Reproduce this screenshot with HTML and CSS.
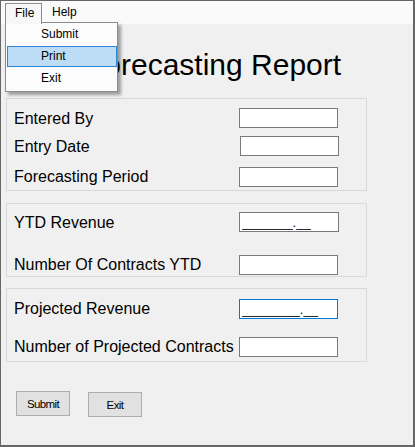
FILE: index.html
```html
<!DOCTYPE html>
<html>
<head>
<meta charset="utf-8">
<link rel="stylesheet" href="styles.css">
</head>
<body>
<div class="window">
  <div class="menubar">
    <div class="menu-item menu-open">File</div>
    <div class="menu-item">Help</div>
  </div>
  <div class="dropdown">
    <div class="drop-item">Submit</div>
    <div class="drop-item drop-hover">Print</div>
    <div class="drop-item">Exit</div>
  </div>

  <h1 class="title">Forecasting Report</h1>

  <div class="group group-1">
    <div class="row row-a">
      <label class="lbl">Entered By</label>
      <input class="field" type="text">
    </div>
    <div class="row row-b">
      <label class="lbl">Entry Date</label>
      <input class="field shift-x" type="text">
    </div>
    <div class="row row-c">
      <label class="lbl">Forecasting Period</label>
      <input class="field shift-y" type="text">
    </div>
  </div>

  <div class="group group-2">
    <div class="row row-d">
      <label class="lbl">YTD Revenue</label>
      <input class="field wide" type="text" value="_______.__">
    </div>
    <div class="row row-e">
      <label class="lbl">Number Of Contracts YTD</label>
      <input class="field shift-y" type="text">
    </div>
  </div>

  <div class="group group-3">
    <div class="row row-f">
      <label class="lbl">Projected Revenue</label>
      <input class="field focused shift-y" type="text" value="________.__">
    </div>
    <div class="row row-g">
      <label class="lbl">Number of Projected Contracts</label>
      <input class="field shift-y" type="text">
    </div>
  </div>

  <div class="buttons">
    <button class="btn">Submit</button>
    <button class="btn shift-y">Exit</button>
  </div>
</div>
</body>
</html>
```
FILE: styles.css
```css
* { box-sizing: border-box; }

html, body {
  margin: 0;
  padding: 0;
  background: #f0f0f0;
}

body {
  font-family: "Liberation Sans", Arial, sans-serif;
  color: #000;
}

.window {
  position: relative;
  width: 415px;
  height: 447px;
  border-style: solid;
  border-color: #666666;
  border-width: 1px 2px 2px 1px;
  background: #f0f0f0;
  overflow: hidden;
}

.menubar {
  height: 23px;
  background: #fafafa;
  display: flex;
  align-items: flex-start;
  padding-left: 4px;
  padding-top: 2px;
}

.menu-item {
  font-size: 12px;
  height: 20px;
  line-height: 19px;
  padding: 0 8px 0 10px;
}

.menu-open {
  position: relative;
  z-index: 3;
  width: 37px;
  height: 21px;
  padding-left: 9px;
  border: 1px solid #8c8c8c;
  border-bottom: none;
  background: #f7f7f7;
  line-height: 19px;
}

.dropdown {
  position: absolute;
  z-index: 2;
  left: 4px;
  top: 21px;
  width: 113px;
  height: 70px;
  background: #fcfcfc;
  border: 1px solid #8c8c8c;
  box-shadow: 3px 3px 3px rgba(0, 0, 0, 0.35);
}

.drop-item {
  height: 22px;
  line-height: 22px;
  font-size: 12px;
  padding-left: 35px;
}

.drop-hover {
  position: relative;
  z-index: 0;
}

.drop-hover::before {
  content: "";
  position: absolute;
  left: 1px;
  right: 0;
  top: 1px;
  bottom: 0;
  background: #bddcf5;
  border: 1px solid #2b87d8;
  z-index: -1;
}

.title {
  margin: 0;
  padding: 23px 0 0 85px;
  height: 59px;
  font-size: 30px;
  line-height: 36px;
  font-weight: normal;
}

.group {
  margin-left: 5px;
  width: 361px;
  border: 1px solid #d9d9d9;
  padding-left: 7px;
}

.group-1 {
  margin-top: 15px;
  padding-top: 9px;
  padding-bottom: 3px;
}

.group-2 {
  margin-top: 12px;
  padding-top: 8px;
  padding-bottom: 1px;
}

.group-3 {
  margin-top: 11px;
  padding-top: 9px;
  padding-bottom: 4px;
}

.row {
  display: grid;
  grid-template-columns: 225px 99px;
  align-items: start;
}

.row-a { height: 28px; }
.row-b { height: 30px; }
.row-c { height: 21px; }
.row-d { height: 42px; }
.row-e { height: 21px; }
.row-f { height: 38px; }
.row-g { height: 21px; }

.lbl {
  font-size: 16px;
  line-height: 20px;
  margin-top: 1px;
  white-space: nowrap;
}

.field {
  width: 99px;
  height: 20px;
  margin: 0;
  border: 1px solid #7a7a7a;
  background: #ffffff;
  padding: 0 2px 0 2px;
  font-family: "Liberation Sans", Arial, sans-serif;
  font-size: 13px;
  color: #000;
  outline: none;
}

.wide { width: 100px; }

.focused { border-color: #0078d7; }

.shift-x { margin-left: 1px; }
.shift-y { margin-top: 1px; }

.buttons {
  display: flex;
  align-items: flex-start;
  gap: 18px;
  margin: 29px 0 0 15px;
}

.btn {
  width: 54px;
  height: 25px;
  margin: 0;
  padding: 0;
  border: 1px solid #adadad;
  background: #e1e1e1;
  font-family: "Liberation Sans", Arial, sans-serif;
  font-size: 11.5px;
  letter-spacing: -0.6px;
  color: #000;
}

.btn.shift-y { margin-top: 1px; }
```
